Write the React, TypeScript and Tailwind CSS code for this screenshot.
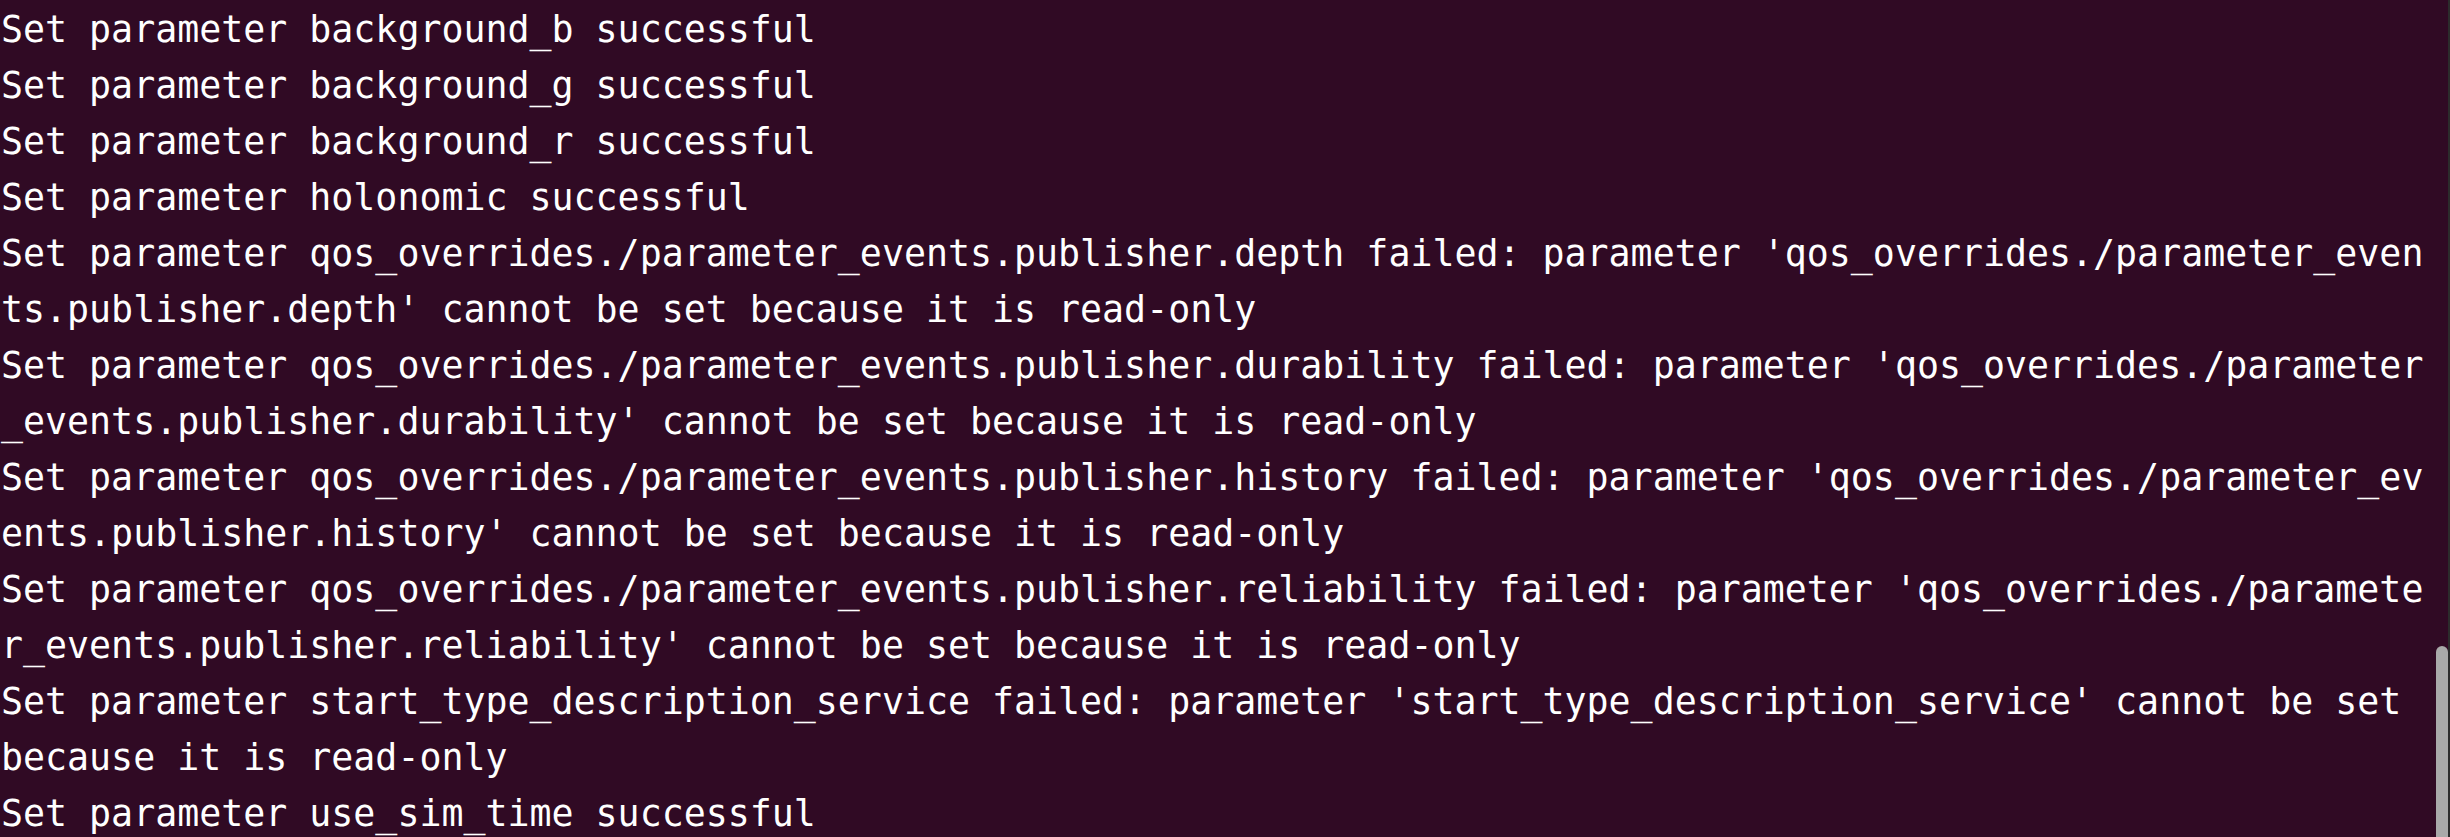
const lines = [
  "Set parameter background_b successful",
  "Set parameter background_g successful",
  "Set parameter background_r successful",
  "Set parameter holonomic successful",
  "Set parameter qos_overrides./parameter_events.publisher.depth failed: parameter 'qos_overrides./parameter_even",
  "ts.publisher.depth' cannot be set because it is read-only",
  "Set parameter qos_overrides./parameter_events.publisher.durability failed: parameter 'qos_overrides./parameter",
  "_events.publisher.durability' cannot be set because it is read-only",
  "Set parameter qos_overrides./parameter_events.publisher.history failed: parameter 'qos_overrides./parameter_ev",
  "ents.publisher.history' cannot be set because it is read-only",
  "Set parameter qos_overrides./parameter_events.publisher.reliability failed: parameter 'qos_overrides./paramete",
  "r_events.publisher.reliability' cannot be set because it is read-only",
  "Set parameter start_type_description_service failed: parameter 'start_type_description_service' cannot be set",
  "because it is read-only",
  "Set parameter use_sim_time successful",
];

export default function App() {
  return (
    <div className="flex h-[837px] w-[2450px] overflow-hidden bg-[#300a24]">
      <div
        className="flex-1 pl-[1px] pt-[2px] text-[36.6px] leading-[56px] text-white whitespace-pre"
        style={{ fontFamily: '"DejaVu Sans Mono", monospace' }}
      >
        {lines.map((line, i) => (
          <div key={i} className="h-[56px]">
            {line}
          </div>
        ))}
      </div>
      <div className="flex w-[20px] flex-col pl-[8px] pt-[646px]">
        <div className="h-full w-[12px] rounded-t-full bg-[#a9a9a9]" />
      </div>
      <div className="w-[2px] bg-[#2c2c2c]" />
    </div>
  );
}
